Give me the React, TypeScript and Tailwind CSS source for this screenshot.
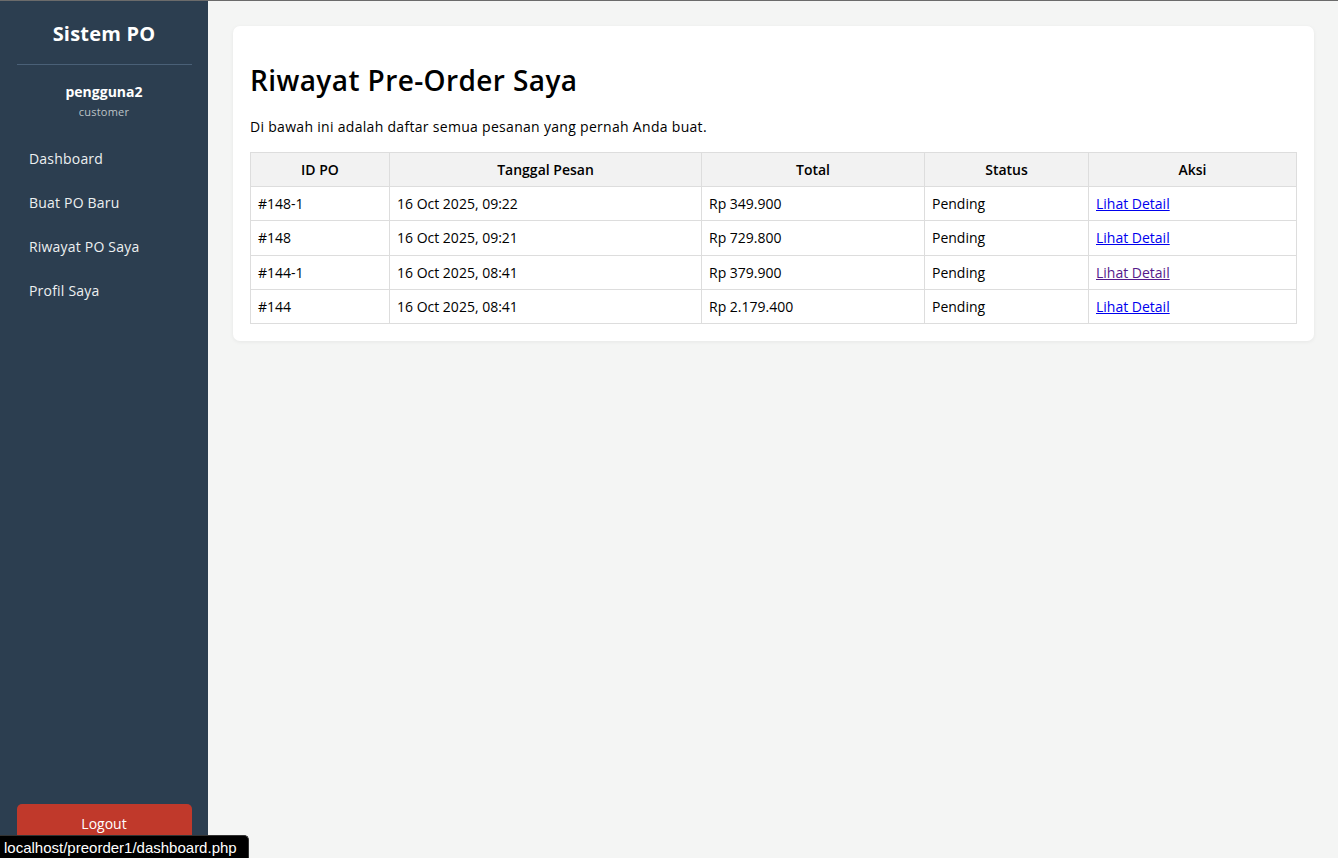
import React from 'react';

type Order = {
  id: string;
  date: string;
  total: string;
  status: string;
  visited?: boolean;
};

const orders: Order[] = [
  { id: '#148-1', date: '16 Oct 2025, 09:22', total: 'Rp 349.900', status: 'Pending' },
  { id: '#148', date: '16 Oct 2025, 09:21', total: 'Rp 729.800', status: 'Pending' },
  { id: '#144-1', date: '16 Oct 2025, 08:41', total: 'Rp 379.900', status: 'Pending', visited: true },
  { id: '#144', date: '16 Oct 2025, 08:41', total: 'Rp 2.179.400', status: 'Pending' },
];

const navItems = ['Dashboard', 'Buat PO Baru', 'Riwayat PO Saya', 'Profil Saya'];

function Sidebar() {
  return (
    <aside className="w-[208px] shrink-0 bg-[#2c3e50] text-white flex flex-col px-[16.5px]">
      <div className="pt-[19px] pb-[16px] border-b border-[#4a6077] text-center">
        <h2 className="text-[20px] leading-[28px] font-bold tracking-[0.2px]">Sistem PO</h2>
      </div>
      <div className="text-center pt-[17px]">
        <p className="text-[14px] leading-[20px] font-bold">pengguna2</p>
        <p className="text-[11px] leading-[16px] text-[#bdc3c7] mt-[2px] tracking-[0.2px]">customer</p>
      </div>
      <nav className="mt-[16px] flex flex-col">
        {navItems.map((item) => (
          <a key={item} href="#" className="px-[12.5px] h-[44px] flex items-center text-[14px] text-[#ecf0f1] tracking-[0.2px]">
            {item}
          </a>
        ))}
      </nav>
      <div className="mt-auto pb-[16px]">
        <button className="w-full h-[38px] rounded-[5px] bg-[#c0392b] text-[14px] text-white">Logout</button>
      </div>
    </aside>
  );
}

export default function App() {
  return (
    <div
      className="min-h-[858px] h-[858px] flex border-t border-[#6b6b6b] bg-[#f4f5f4] text-black"
      style={{ fontFamily: '"Open Sans", "Liberation Sans", sans-serif' }}
    >
      <Sidebar />
      <main className="flex-1 pl-[25px] pr-[24px] pt-[25px] tracking-[0.3px]">
        <div className="bg-white rounded-[7px] shadow-[0_1px_4px_rgba(0,0,0,0.06)] px-[17px] pt-[17px] pb-[17px]">
          <h1 className="mt-[19px] text-[28px] leading-[36px] font-semibold tracking-[0.4px]">Riwayat Pre-Order Saya</h1>
          <p className="mt-[19px] text-[14px] leading-[20px]">
            Di bawah ini adalah daftar semua pesanan yang pernah Anda buat.
          </p>
          <table className="mt-[15px] w-full border-collapse text-[14px] tracking-normal">
            <thead>
              <tr className="bg-[#f2f2f2] h-[34px]">
                <th className="border border-[#dddddd] w-[139px] font-semibold">ID PO</th>
                <th className="border border-[#dddddd] w-[312px] font-semibold">Tanggal Pesan</th>
                <th className="border border-[#dddddd] w-[223px] font-semibold">Total</th>
                <th className="border border-[#dddddd] w-[164px] font-semibold">Status</th>
                <th className="border border-[#dddddd] font-semibold">Aksi</th>
              </tr>
            </thead>
            <tbody>
              {orders.map((o) => (
                <tr key={o.id} className="h-[34.3px]">
                  <td className="border border-[#dddddd] px-[7px]">{o.id}</td>
                  <td className="border border-[#dddddd] px-[7px]">{o.date}</td>
                  <td className="border border-[#dddddd] px-[7px]">{o.total}</td>
                  <td className="border border-[#dddddd] px-[7px]">{o.status}</td>
                  <td className="border border-[#dddddd] px-[7px]">
                    <a href="#" className={`underline ${o.visited ? 'text-[#551a8b]' : 'text-[#0000ee]'}`}>
                      Lihat Detail
                    </a>
                  </td>
                </tr>
              ))}
            </tbody>
          </table>
        </div>
      </main>
      <div
        className="fixed left-0 bottom-0 h-[23px] pl-[4px] pr-[11px] bg-black text-white text-[15px] leading-[23px] rounded-tr-[5px] border-t border-r border-[#333]"
        style={{ fontFamily: '"Liberation Sans", Arial, sans-serif' }}
      >
        localhost/preorder1/dashboard.php
      </div>
    </div>
  );
}
